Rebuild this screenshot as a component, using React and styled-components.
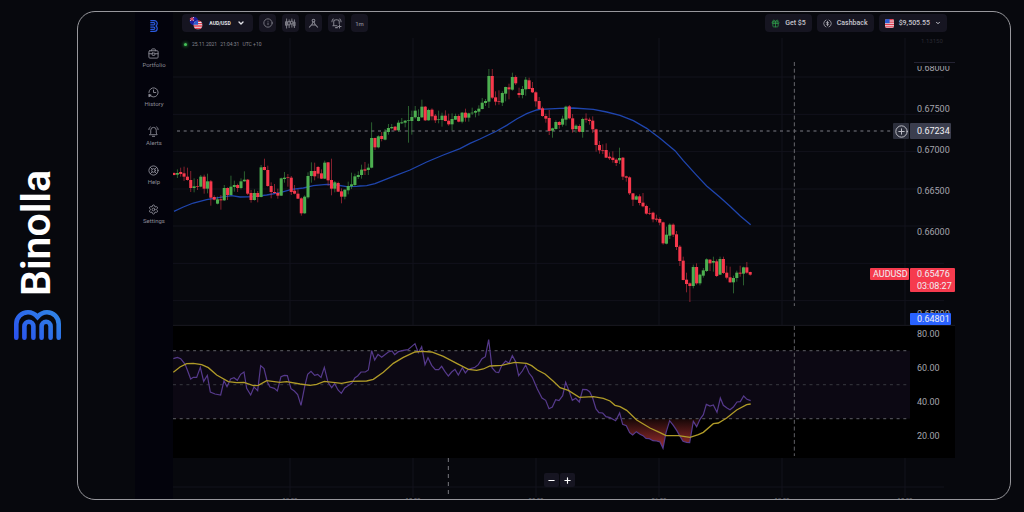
import React from "react";
import styled, { createGlobalStyle } from "styled-components";
import { ChevronDown, Gift, History, Info, LifeBuoy, Settings } from "lucide-react";

const Global = createGlobalStyle`
  *, *::before, *::after { box-sizing: border-box; }
  body { margin: 0; background: #07080d; font-family: Roboto, "Liberation Sans", sans-serif; color: #b4b4bd; }
  button { font: inherit; color: inherit; border: 0; cursor: pointer; }
  ul { list-style: none; margin: 0; padding: 0; }
  svg { display: block; }
`;

const Page = styled.div`
  display: flex;
  min-height: 100vh;
  background: #07080d;
`;
const Brand = styled.div`
  flex: none;
  width: 77px;
  padding: 0 2px 2px 0;
  display: flex;
  flex-direction: column;
  align-items: center;
  justify-content: center;
  gap: 14px;
`;
const BrandName = styled.h1`
  margin: 0;
  padding-left: 3px;
  writing-mode: vertical-rl;
  transform: rotate(180deg);
  color: #fff;
  font-size: 41px;
  line-height: 48px;
  font-weight: 600;
`;
const Device = styled.div`
  flex: 1;
  min-width: 0;
  margin: 11px 13px 12px 0;
  padding: 0 55px 0 57px;
  display: flex;
  border: 1px solid #97979c;
  border-radius: 18px;
  overflow: hidden;
`;
const Sidebar = styled.nav`
  flex: none;
  width: 38px;
  padding-top: 8px;
  display: flex;
  flex-direction: column;
  align-items: center;
  gap: 16px;
  background: #03030c;
`;
const Menu = styled.ul`
  display: flex;
  flex-direction: column;
  gap: 18px;
`;
const MenuLink = styled.a`
  display: flex;
  flex-direction: column;
  align-items: center;
  gap: 2px;
  color: #8b8b96;
  font-size: 6px;
  line-height: 8px;
  text-decoration: none;
`;
const Main = styled.main`
  flex: 1;
  min-width: 0;
  display: flex;
  flex-direction: column;
`;
const Toolbar = styled.header`
  flex: none;
  display: flex;
  justify-content: space-between;
  padding: 2px 8px 3px 9px;
`;
const Group = styled.div`
  display: flex;
  gap: ${(p) => p.$gap}px;
`;
const Button = styled.button`
  display: flex;
  align-items: center;
  justify-content: center;
  height: 18px;
  padding: 0 6px;
  border-radius: 4px;
  background: #161521;
  color: #c6c6ce;
  font-size: 7px;
  font-weight: 500;
  gap: 5px;
`;
const PairButton = styled(Button)`
  width: 71px;
  padding: 0 8px 0 7px;
  justify-content: space-between;
  color: #e2e2e8;
  font-size: 5px;
  font-weight: 700;
`;
const ToolButton = styled(Button)`
  width: 17px;
  padding: 0;
  color: #85858f;
  font-size: 6px;
`;
const Pane = styled.section`
  display: grid;
  height: ${(p) => p.$height}px;
  position: relative;
  background: ${(p) => p.$bg || "transparent"};
  > * { grid-area: 1 / 1; min-width: 0; }
`;
const Plot = styled.svg`
  width: 100%;
  height: ${(p) => p.$height}px;
  path, line, polyline { vector-effect: non-scaling-stroke; }
`;
const Clock = styled.p`
  margin: 6px 0 0 10px;
  align-self: start;
  display: flex;
  align-items: center;
  gap: 3px;
  color: #85858e;
  font-size: 5px;
  line-height: 6px;
`;
const Dot = styled.i`
  width: 3px;
  height: 3px;
  margin: 0 2px 0 1px;
  border-radius: 50%;
  background: #45c158;
  box-shadow: 0 0 3px 1px #1d5f2b;
`;
const Axis = styled.div`
  justify-self: end;
  width: 45px;
  color: #a4a4ac;
  font-size: 9px;
`;
const AxisTop = styled.p`
  margin: 0 0 0 4px;
  height: 28px;
  padding: 1px 0 0 7px;
  border-bottom: 1px solid #242333;
  color: #292932;
  font-size: 6px;
  line-height: 10px;
`;
const Window = styled.div`
  height: 260px;
  margin-top: 3px;
  overflow: hidden;
`;
const Scale = styled.ul`
  margin-top: ${(p) => p.$top}px;
  padding-left: 7px;
  li { height: ${(p) => p.$step}px; line-height: ${(p) => p.$step}px; }
`;
const Tags = styled.div`
  position: absolute;
  top: ${(p) => p.$top}px;
  right: 0;
  display: flex;
  align-items: flex-start;
  gap: 1px;
`;
const Tag = styled.span`
  display: block;
  width: ${(p) => p.$width}px;
  margin-right: ${(p) => p.$end || 0}px;
  padding: ${(p) => p.$pad || 0}px 0 ${(p) => p.$pad || 0}px 7px;
  border-radius: 1px;
  background: ${(p) => p.$bg};
  color: #f0f0f4;
  font-size: 9px;
  line-height: 12px;
`;
const TickerTag = styled(Tag)`
  padding-left: 3px;
`;
const AddAlert = styled.button`
  width: 16px;
  height: 16px;
  padding: 0;
  display: grid;
  place-items: center;
  border-radius: 1px;
  background: #2c2f3c;
  color: #c0c0c8;
`;
const Footer = styled.footer`
  flex: 1;
  min-height: 41px;
  position: relative;
  display: grid;
  > * { grid-area: 1 / 1; min-width: 0; }
`;
const Zoom = styled.div`
  display: flex;
  gap: 1px;
  align-self: start;
  justify-self: center;
  margin: 15px 10px 0 0;
`;
const ZoomButton = styled.button`
  width: 15px;
  height: 14px;
  padding: 0;
  display: grid;
  place-items: center;
  border-radius: 2px;
  background: #161521;
  color: #fff;
`;
const Times = styled.div`
  align-self: start;
  height: 41px;
  overflow: hidden;
  display: flex;
  gap: 93px;
  padding: 38px 0 0 102px;
  color: #6c6c75;
  font-size: 6px;
  line-height: 7px;
  span { flex: none; width: 30px; text-align: center; }
`;

// Bars: [rising, high, body top, body bottom, low]; three plot units per pixel.
const segments = [
  [180, [
    [0,337,339,345,346],[1,328,339,344,354],[0,323,336,342,350],[0,320,340,350,363],[0,323,350,360,362],[0,333,360,384,396],
    [1,355,379,384,397],[0,357,378,380,390],[1,345,350,380,382],[0,344,350,386,401],[1,341,364,386,400],[0,360,364,413,437],
    [0,406,411,419,421],[1,410,418,431,433],[0,405,418,421,449],[1,375,384,421,423],[0,382,384,405,420],[1,347,380,405,406],
    [1,362,375,381,395],[0,371,375,384,396],[1,355,364,384,388],[1,334,359,364,365],[0,357,359,401,405],[0,390,399,420,428],
    [1,388,399,420,422],[0,393,399,411,427],[1,315,322,411,412],[0,296,321,330,331],[0,317,330,378,380],[0,367,378,396,415],
    [0,372,396,399,401],[0,386,399,407,416],[1,353,355,407,408],[1,336,353,357,368],[0,342,352,354,380],[0,348,353,396,405],
    [0,375,392,401,403],[0,388,401,416,417],[0,412,415,460,467],[1,406,410,460,461],[1,337,348,412,416],[1,307,333,348,368],
    [0,308,333,349,361],[0,318,321,341,355],[0,328,340,356,357],[1,302,308,356,357],[0,306,307,361,377],[0,296,360,386,406],
    [1,363,367,386,397],[0,365,369,395,396],[0,385,394,410,430],[1,388,389,410,418],[1,365,378,391,403],[1,338,373,379,387],
    [1,341,349,375,378],[1,334,345,351,357],[1,314,329,345,356],[0,306,328,332,345],[1,311,323,330,345],[1,187,234,323,325],
    [0,233,234,262,270],[1,226,229,262,265],[0,216,228,237,244],[1,207,215,239,241],[1,192,204,216,224],[1,192,201,205,208],
    [0,198,200,211,212],[1,181,188,211,215],[1,174,187,190,192],[1,180,182,188,202],[1,138,181,183,248],[1,152,171,183,224],
    [1,138,152,172,176],[1,148,171,183,184],[1,119,140,172,174],[0,138,140,181,183],[1,146,150,181,182],[0,145,149,169,181],
    [0,162,167,181,189],[1,152,178,180,190],[1,158,167,180,200],[0,151,167,183,184],[0,161,182,193,197],[1,160,177,193,211],
    [1,161,168,179,180],[0,163,168,185,187],[1,156,158,185,190],[0,146,158,173,185],[1,158,160,173,185],[1,143,158,160,165],
    [1,150,153,158,172],[1,136,146,155,167],[1,114,128,147,148],[1,117,123,129,138],[1,27,48,125,144],[0,27,48,113,117],
    [0,94,112,125,136],[0,91,124,126,134],[1,94,99,128,138],[1,80,81,101,124],[0,71,82,88,118],[1,38,51,89,92],
    [0,46,51,70,75],[0,83,99,105,113],[1,78,87,105,115],[1,51,59,88,107],[0,53,61,87,88],[0,66,84,97,99],
    [0,94,97,124,140],[0,111,123,147,149],[0,140,145,168,170]]],
  [270, [
    [0,71,78,86,98],[0,60,84,123,135],[1,113,115,122,143],[1,91,96,117,119],[0,93,96,105,116],[1,77,86,104,110],
    [1,47,50,89,107],[0,45,49,85,88],[0,72,85,118,128],[1,103,107,117,128],[0,103,108,125,127],[1,83,87,126,143],
    [0,70,86,89,98],[0,83,89,93,104],[0,79,92,118,129],[0,116,118,165,185],[0,153,165,181,191],[0,163,180,182,192],
    [0,160,180,203,204],[0,187,200,205,210],[0,184,203,210,218],[0,205,209,219,228],[1,173,204,211,222],[0,201,203,260,270],
    [0,257,259,263,275],[0,259,262,310,315],[0,309,310,329,348],[1,315,319,329,330],[0,313,319,339,346],[0,309,338,349,352],
    [0,344,348,371,374],[0,354,369,371,375],[0,365,368,388,397],[0,374,386,389,395],[0,382,387,398,406],[0,395,397,460,464],
    [1,410,434,461,463],[1,400,404,437,447],[0,400,404,434,441],[0,423,433,471,480],[0,465,470,513,528],[0,500,512,570,571],
    [0,548,569,582,607],[0,577,580,588,636],[1,524,531,588,595],[0,520,531,580,584],[1,551,554,580,586],[1,534,541,557,563],
    [1,505,508,543,546],[0,507,509,520,543],[1,500,513,518,545],[0,508,514,558,561],[1,500,507,554,555],[0,500,507,549,552],
    [0,527,548,563,568],[0,530,562,577,578],[1,557,564,577,610],[1,542,548,564,575],[0,527,548,551,560],[1,530,532,551,586],
    [0,516,532,548,551],[0,545,546,554,557]]],
];
const bars = segments.flatMap(([base, list]) => list.map(([up, ...v]) => [up, ...v.map((n) => n + base)]));

const trace = (parts) =>
  parts.flatMap(([dx, dy, list]) => {
    const out = [];
    for (let i = 0; i < list.length; i += 2) out.push(`${list[i] + dx},${list[i + 1] + dy}`);
    return out;
  }).join(" ");

const average = trace([
  [510, 180, [12,454,40,441,70,429,110,419,150,412,185,407,210,411,250,410,290,405,330,398,365,388,400,384,430,377,470,373,500,375,530,380,560,379]],
  [1080, 180, [0,378,20,377,45,371,100,349,150,330,200,306,250,285,300,266,330,250,360,237,410,213,440,196,470,177,500,161,530,150]],
  [1620, 270, [0,58,60,55,100,54,160,58,200,66,240,76,280,92,320,115,360,145,405,182,430,212,470,256,500,288,540,322,570,349,600,377,632,404]],
]);
const rsi = trace([
  [510, 960, [10,116,22,112,32,116,45,132,52,150,62,177,70,172,80,172,91,142,101,184,112,166,121,216,135,222,152,225,162,182,171,200,182,177,192,173,202,181,212,163,222,156,230,205,242,225,252,201,263,212,272,137,282,146,292,186,300,201,313,205,322,213,333,170,343,166,352,167,363,206,373,213,383,224,393,256,404,200,413,163,423,154,434,166,443,163,453,172,463,142,474,187,485,203,494,191,504,210,514,220,524,204,534,197,545,190,555,173,563,168,573,156,586,156,595,150,605,92,614,120,624,103,635,112,655,96,666,93,674,104,685,95,700,91,714,89,735,71,745,98,755,80,765,134,774,113,785,136,796,149,806,149,815,139,825,155,835,168,845,156,855,148,865,165,877,143]],
  [1380, 960, [16,159,25,148,45,142,55,134,66,116,76,110,86,59,96,143,107,156,116,158,125,137,137,123,147,130,157,107,167,125,176,167,187,153,197,135,207,159,217,172,232,207,246,234,257,241,267,266,277,261,287,239,297,242,308,227,317,187,326,210,337,241,347,235,358,246,368,208,380,209,389,215,398,234,408,267,417,278,428,279,438,290,450,293,467,302,479,279,488,313,499,317,509,338,518,345,529,335,540,343,549,347,558,355,568,356,579,362,590,363,600,366,609,385,618,338,629,302,640,316,650,331,659,347,669,364,680,367,689,368,700,304,710,320,720,298,730,284,739,253,750,258,760,255,771,277,781,234,790,256,801,264,810,269,820,261,831,246,841,245,851,228,861,238,872,242]],
]);
const signal = trace([
  [510, 960, [10,157,30,141,50,131,70,130,95,134,115,143,140,165,175,185,200,188,222,187,250,197,265,196,290,182,330,187,350,185,390,192,420,196,440,193,463,184,515,190,545,184,590,183,610,178,640,157,670,130,700,112,735,96,755,94,785,96,820,109,860,130]],
  [1380, 960, [25,148,50,151,70,147,90,138,125,136,165,127,200,130,215,137,232,150,255,162,280,184,300,203,325,211,358,232,400,230,430,235,450,243,465,256,480,260,500,271,530,300,570,324,600,338,618,347,655,347,690,352,715,344,730,337,760,311,775,309,800,294,830,270,860,254,872,252]],
]);
const columns = [870, 1239, 1608, 1977, 2346, 2715];
const rows = [231, 343, 455, 567, 678, 790, 902];

function Mark({ width, height, turned, flat }) {
  return (
    <svg width={width} height={height} viewBox={turned ? "0 0 30 47" : "0 0 47 30"} fill="none" strokeWidth="4.6" strokeLinecap="round" stroke={flat ? "#2a5ade" : "url(#mark)"} aria-hidden="true">
      <defs>
        <linearGradient id="mark" gradientUnits="userSpaceOnUse" x1="6" y1="30" x2="34" y2="0">
          <stop offset="0" stopColor="#2b54ee" />
          <stop offset="1" stopColor="#2f80e6" />
        </linearGradient>
      </defs>
      <g transform={turned ? "translate(30 0) rotate(90)" : undefined}>
        <path d="M2.3 27.7V14A11.7 11.7 0 0 1 14 2.3C18 2.3 21 4 23.5 7 26 4 29 2.3 33 2.3A11.7 11.7 0 0 1 44.7 14V27.7" />
        <path d="M10.4 27.7V16.2a4.5 4.5 0 0 1 9 0V27.7M27.6 27.7V16.2a4.5 4.5 0 0 1 9 0V27.7" />
      </g>
    </svg>
  );
}
const Line = ({ size = 11, children, width = 2 }) => (
  <svg width={size} height={size} viewBox="0 0 24 24" fill="none" stroke="currentColor" strokeWidth={width} strokeLinecap="round" strokeLinejoin="round" aria-hidden="true">{children}</svg>
);
const BriefIcon = () => (
  <Line><rect x="2" y="6" width="20" height="16" rx="2" /><path d="M8 6V3.5A1.5 1.5 0 0 1 9.500 2h5A1.500 1.500 0 0 1 16 3.500V6M2 12.500h7M15 12.500h7" /><rect x="9" y="11" width="6" height="5" rx="1" /></Line>
);
const BellIcon = () => (
  <Line><path d="M4 19h16l-2-3.500V9a6 6 0 0 0-12 0v6.500zM9.500 22.500h5M2 8c0-2.500 1-4.500 3-6M22 8c0-2.500-1-4.500-3-6" /></Line>
);
const HistoryIcon = () => (
  <Line><path d="M4.500 18.500A10 10 0 1 0 2 12M12 6.500V12h5" /><path d="M2 16.500v5l4.500-3z" fill="currentColor" /></Line>
);
const CandlesIcon = () => (
  <Line width={2}><path d="M3.500 2v20M9 4v4M9 15v6M15 2v5M15 13v7M20.500 4v17" /><rect x="7" y="8" width="4" height="7" /><rect x="13" y="7" width="4" height="6" /><path d="M2 8h3v8H2zM19 9h3v8h-3z" /></Line>
);
const CompassIcon = () => (
  <Line width={2.2}><circle cx="12" cy="5.500" r="3" /><path d="M11 8.500C10 14 7 17 3 20M13 8.500C14 14 17 17 21 20M7 15.500h10" /></Line>
);
const AlarmIcon = () => (
  <Line width={2.2}><path d="M6 17V8c0-2 2-4 6-4s6 2 6 4v4M4 17h9M10 21h4M2 8c0-2.500 1-4.500 3-6M22 8c0-2.500-1-4.500-3-6M18.500 15v7M15 18.500h7" /></Line>
);
const CashIcon = () => (
  <Line size={9} width={1.8}><path d="M8 2.800A10 10 0 0 0 8 21.200M16 2.800a10 10 0 0 1 0 18.400M12 6v12M15 9c-1-1.500-6-1.500-6 .8 0 3 6 1.500 6 4.400 0 2.300-5 2.300-6 .3" /></Line>
);
const UsFlag = ({ size, round }) => (
  <svg width={size} height={size} viewBox="0 0 9 9" aria-hidden="true">
    <clipPath id={round ? "usRound" : "usSoft"}><rect width="9" height="9" rx={round ? 4.5 : 2} /></clipPath>
    <g clipPath={`url(#${round ? "usRound" : "usSoft"})`}>
      <rect width="9" height="9" fill="#ececf2" />
      <path d="M0 .7h9M0 3.100h9M0 5.500h9M0 7.900h9" stroke="#e23b4e" strokeWidth="1.400" />
      <rect width="4.600" height="4.200" fill="#2a5bd0" />
    </g>
  </svg>
);
const PairFlags = () => (
  <svg width="14" height="14" viewBox="0 0 14 14" aria-hidden="true">
    <circle cx="5" cy="5" r="4.300" fill="#1a1c9c" />
    <path d="M1.500 2.500 5 4.500M5 1 1 5" stroke="#e8e8f2" strokeWidth=".8" />
    <path d="M3 .9v4.200M.8 3h4.400" stroke="#e2384a" strokeWidth="1.100" />
    <svg x="4.500" y="4.500" width="9" height="9"><UsFlag size={9} round /></svg>
  </svg>
);

const menu = [
  ["Portfolio", <BriefIcon key="i" />],
  ["History", <HistoryIcon key="i" />],
  ["Alerts", <BellIcon key="i" />],
  ["Help", <LifeBuoy key="i" size={11} />],
  ["Settings", <Settings key="i" size={11} />],
];

function PriceChart() {
  return (
    <Pane $height={291} aria-label="AUD/USD price">
      <Plot $height={291} viewBox="519 105 2346 873" preserveAspectRatio="none">
        <g stroke="#12121c">
          {columns.map((x) => <line key={x} x1={x} x2={x} y1="114" y2="975" />)}
          {rows.map((y) => <line key={y} x1="519" x2="2832" y1={y} y2={y} />)}
          <line x1="519" x2="2865" y1="976" y2="976" stroke="#191920" />
        </g>
        <polyline points={average} fill="none" stroke="#1f45ad" strokeWidth="1.3" />
        <line x1="531" x2="2676" y1="393" y2="393" stroke="#56565d" strokeWidth="1.4" strokeDasharray="3 3.700" />
        <line x1="2383" x2="2383" y1="186" y2="918" stroke="#67676d" strokeDasharray="4 2.700" />
        {bars.map(([up, high, top, bottom, low], i) => {
          const x = 522 + i * 10.05;
          return (
            <g key={i} fill={up ? "#4caf50" : "#f7384c"}>
              <rect x={x - 1.3} y={high} width="2.600" height={low - high} opacity=".6" />
              <rect x={x - 4.6} y={top} width="9.200" height={bottom - top} />
            </g>
          );
        })}
      </Plot>
      <Clock><Dot /><span>25.11.2021</span><span>21:04:31</span><span>UTC +10</span></Clock>
      <Axis>
        <AxisTop>1.13150</AxisTop>
        <Window>
          <Scale $top={-18} $step={41}>
            {["0.68000", "0.67500", "0.67000", "0.66500", "0.66000", "0.65500", "0.65000"].map((v) => <li key={v}>{v}</li>)}
          </Scale>
        </Window>
      </Axis>
      <Tags $top={88}>
        <AddAlert aria-label="Add alert"><Line size={13} width={1.8}><circle cx="12" cy="12" r="10.500" /><path d="M12 7v10M7 12h10" /></Line></AddAlert>
        <Tag $width={41} $end={4} $pad={2} $bg="#3b3e4e">0.67234</Tag>
      </Tags>
      <Tags $top={233}>
        <TickerTag $width={39} $bg="#f63b4e">AUDUSD</TickerTag>
        <Tag $width={45} $bg="#f63b4e">0.65476<br />03:08:27</Tag>
      </Tags>
      <Tags $top={278}><Tag $width={41} $end={4} $bg="#2962ff">0.64801</Tag></Tags>
    </Pane>
  );
}

function RsiChart() {
  return (
    <Pane $height={132} $bg="#000" aria-label="Relative strength index">
      <Plot $height={132} viewBox="519 978 2346 396" preserveAspectRatio="none">
        <defs>
          <linearGradient id="oversold" gradientUnits="userSpaceOnUse" x1="0" x2="0" y1="1256" y2="1345">
            <stop offset="0" stopColor="#a83232" stopOpacity=".12" />
            <stop offset="1" stopColor="#a83232" stopOpacity=".95" />
          </linearGradient>
          <clipPath id="below"><rect x="519" y="1256" width="2346" height="118" /></clipPath>
        </defs>
        <rect x="519" y="1052" width="2211" height="204" fill="#0c0813" />
        <polygon points={`${rsi} 2252,1256 522,1256`} fill="url(#oversold)" clipPath="url(#below)" />
        <g stroke="#4b4b52" strokeWidth="1.2" strokeDasharray="3 3.700">
          <line x1="519" x2="2730" y1="1052" y2="1052" />
          <line x1="519" x2="2730" y1="1154" y2="1154" stroke="#2e2e36" />
          <line x1="519" x2="2730" y1="1256" y2="1256" />
        </g>
        <line x1="2383" x2="2383" y1="978" y2="1368" stroke="#606066" strokeDasharray="4 2.700" />
        <polyline points={rsi} fill="none" stroke="#563a8c" strokeWidth="1.2" />
        <polyline points={signal} fill="none" stroke="#b09b28" strokeWidth="1.3" />
      </Plot>
      <Axis>
        <Scale $top={-9} $step={34}>
          {["80.00", "60.00", "40.00", "20.00"].map((v) => <li key={v}>{v}</li>)}
        </Scale>
      </Axis>
    </Pane>
  );
}

export default function App() {
  return (
    <>
      <Global />
      <Page>
        <Brand>
          <BrandName>Binolla</BrandName>
          <Mark width={47} height={30} />
        </Brand>
        <Device>
          <Sidebar aria-label="Main">
            <Mark width={8} height={12} turned flat />
            <Menu>
              {menu.map(([label, icon]) => <li key={label}><MenuLink href="#">{icon}{label}</MenuLink></li>)}
            </Menu>
          </Sidebar>
          <Main>
            <Toolbar>
              <Group $gap={6}>
                <PairButton><PairFlags />AUD/USD<ChevronDown size={8} strokeWidth={4} /></PairButton>
                <ToolButton aria-label="Information"><Info size={10} /></ToolButton>
                <ToolButton aria-label="Chart type"><CandlesIcon /></ToolButton>
                <ToolButton aria-label="Drawing tools"><CompassIcon /></ToolButton>
                <ToolButton aria-label="New alert"><AlarmIcon /></ToolButton>
                <ToolButton>1m</ToolButton>
              </Group>
              <Group $gap={5}>
                <Button><Gift size={9} color="#2f9e4b" />Get $5</Button>
                <Button><CashIcon />Cashback</Button>
                <Button><UsFlag size={9} />$9,505.55<ChevronDown size={6} strokeWidth={4} /></Button>
              </Group>
            </Toolbar>
            <PriceChart />
            <RsiChart />
            <Footer>
              <Plot $height={41} viewBox="519 1374 2346 123" preserveAspectRatio="none">
                <g stroke="#12121c">
                  {columns.map((x) => <line key={x} x1={x} x2={x} y1="1374" y2="1491" />)}
                  <line x1="519" x2="2832" y1="1461" y2="1461" />
                </g>
                <line x1="1345" x2="1345" y1="1374" y2="1491" stroke="#77777d" strokeDasharray="4 4" />
              </Plot>
              <Times>
                {["12:00", "18:00", "00:00", "06:00", "12:00", "18:00"].map((t, i) => <span key={i}>{t}</span>)}
              </Times>
              <Zoom>
                <ZoomButton aria-label="Zoom out"><Line size={7} width={4}><path d="M3 12h18" /></Line></ZoomButton>
                <ZoomButton aria-label="Zoom in"><Line size={7} width={4}><path d="M3 12h18M12 3v18" /></Line></ZoomButton>
              </Zoom>
            </Footer>
          </Main>
        </Device>
      </Page>
    </>
  );
}
